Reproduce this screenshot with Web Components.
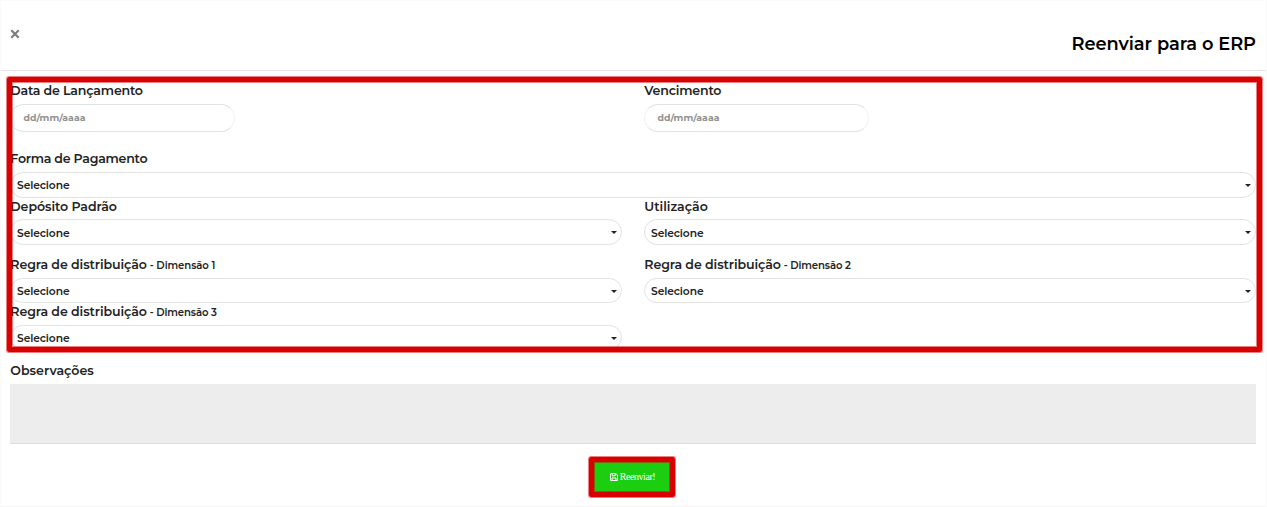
<!DOCTYPE html>
<html lang="pt-BR">
<head>
<meta charset="utf-8">
<title>Reenviar para o ERP</title>
<style>
body{margin:0;background:#fff;font-family:Montserrat,Inter,"Liberation Sans",sans-serif;color:#222}
</style>
</head>
<body>
<erp-dialog></erp-dialog>
<script>
const define=(name,html,init)=>customElements.define(name,class extends HTMLElement{
  connectedCallback(){
    if(this.shadowRoot)return;
    const root=this.attachShadow({mode:'open'});
    const t=document.createElement('template');
    t.innerHTML=html;
    root.append(t.content.cloneNode(true));
    if(init)init(this,root);
  }
});

define('form-field',`<style>
:host{display:block;min-width:0}
.label{display:flex;align-items:baseline;height:17px;line-height:17px;font-size:12.6px;font-weight:600;margin-bottom:var(--label-gap,5px);padding-left:.3px}
</style><div class="label"><slot name="label"></slot></div><slot></slot>`);

define('select-box',`<style>
:host{display:flex;box-sizing:border-box;height:var(--h,26px);border:1px solid #e2e2e2;border-radius:13px;align-items:center;justify-content:space-between;padding:0 4px 0 6px;font-size:10.7px;font-weight:600;line-height:14px;background:#fff;color:#222}
svg{display:block;width:6px;height:3px;margin-top:1px}
tracked-text{margin-top:var(--drop,2px)}
</style><tracked-text measure="52.5">Selecione</tracked-text><svg viewBox="0 0 6 3"><path d="M0 0h6L3 3z" fill="#222"/></svg>`);

define('date-box',`<style>
:host{display:flex;box-sizing:border-box;width:225px;height:28px;border:1px solid #e2e2e2;border-left-color:#f3f3f3;border-right-color:#f3f3f3;border-radius:14px;align-items:center;padding-left:12.5px;font-size:9.3px;font-weight:700;line-height:14px;color:#929292}
</style><tracked-text measure="62">dd/mm/aaaa</tracked-text>`);

define('red-frame',`<style>
:host{display:block;position:absolute;box-sizing:border-box;border:5px solid #d90000;border-radius:2px;box-shadow:0 0 0 1px #d9000080,inset 0 0 0 1px #d9000080;pointer-events:none}
</style>`);

define('send-button',`<style>
:host{display:block;position:relative;width:76px;height:30px}
button{display:flex;width:100%;height:100%;border:0;padding:0 0 0 2px;align-items:center;justify-content:center;gap:2px;background:#1bce10;color:#fff;font:10px/12px "Liberation Serif",serif}
svg{display:block;width:8px;height:8px}
red-frame{inset:-5px}
</style><button><svg viewBox="0 0 8 8" fill="none" stroke="#fff"><path d="M.5.5h5.3L7.5 2.2v5.3h-7z"/><path d="M2.2.5v2.3h3V.5M2 7.5V5h4v2.5"/></svg><slot></slot></button><red-frame></red-frame>`);

define('erp-dialog',`<style>
:host{display:block;position:relative;box-sizing:border-box;width:1267px;height:507px;border:1px solid #fafafa;border-bottom-color:#f5f5f5}
header{display:flex;box-sizing:border-box;height:70px;border-bottom:1px solid #e6e6e6;justify-content:space-between;padding:0 10px 0 9px}
.close{display:block;width:10px;height:10px;margin-top:27.5px}
h1{margin:30px 0 0;font-size:17.8px;line-height:26px;font-weight:600;color:#000}
form{display:flex;flex-direction:column;padding:11px 10px 0 9px}
.row{display:grid;grid-template-columns:612px 612px;column-gap:22px}
.wide{grid-template-columns:1246px}
.r2{margin-top:18px}.r3{--label-gap:4px;--drop:3px}.r4{margin-top:11px}.r4,.r5{--h:25px}
.obs{margin-top:12px}
small{font-size:10.1px;margin-left:3px}
textarea{display:block;box-sizing:border-box;width:100%;height:60px;border:0;border-bottom:1px solid #ddd;background:#ededed;resize:none;padding:4px}
footer{display:flex;justify-content:center;padding:18px 3px 0 0}
.zone{left:6px;top:76px;width:1255px;height:275px}
</style>
<header>
<svg class="close" viewBox="0 0 10 10"><path d="M1.3 1.3l7.4 7.4M8.7 1.3L1.3 8.7" stroke="#7d7d7d" stroke-width="2.2"/></svg>
<h1><tracked-text measure="184.5">Reenviar para o ERP</tracked-text></h1>
</header>
<form>
<div class="row">
<form-field><tracked-text slot="label" measure="132.5">Data de Lançamento</tracked-text><date-box></date-box></form-field>
<form-field><tracked-text slot="label" measure="77">Vencimento</tracked-text><date-box></date-box></form-field>
</div>
<div class="row wide r2"><form-field><tracked-text slot="label" measure="137">Forma de Pagamento</tracked-text><select-box></select-box></form-field></div>
<div class="row r3">
<form-field><tracked-text slot="label" measure="106.5">Depósito Padrão</tracked-text><select-box></select-box></form-field>
<form-field><tracked-text slot="label" measure="63.5">Utilização</tracked-text><select-box></select-box></form-field>
</div>
<div class="row r4">
<form-field><tracked-text slot="label" measure="136.5">Regra de distribuição</tracked-text><small slot="label"><tracked-text measure="65.5">- Dimensão 1</tracked-text></small><select-box></select-box></form-field>
<form-field><tracked-text slot="label" measure="136.5">Regra de distribuição</tracked-text><small slot="label"><tracked-text measure="67">- Dimensão 2</tracked-text></small><select-box></select-box></form-field>
</div>
<div class="row r5">
<form-field><tracked-text slot="label" measure="136.5">Regra de distribuição</tracked-text><small slot="label"><tracked-text measure="67">- Dimensão 3</tracked-text></small><select-box></select-box></form-field>
</div>
<div class="row wide obs"><form-field><tracked-text slot="label" measure="83.5">Observações</tracked-text><textarea aria-label="Observações"></textarea></form-field></div>
<footer><send-button><tracked-text measure="35.5">Reenviar!</tracked-text></send-button></footer>
</form>
<red-frame class="zone"></red-frame>`);

/* Tracks its text to a fixed measure, given in px by the "measure" attribute.
   Defined last, so that the inherited font of every host is already in place. */
define('tracked-text',`<style>:host{display:inline-block;white-space:pre}span{display:inline-block}</style><span><slot></slot></span>`,(host,root)=>{
  const s=root.querySelector('span'),n=host.textContent.length;
  const gap=(+host.getAttribute('measure')-s.getBoundingClientRect().width)/n;
  s.style.letterSpacing=gap.toFixed(3)+'px';
});
</script>
</body>
</html>
